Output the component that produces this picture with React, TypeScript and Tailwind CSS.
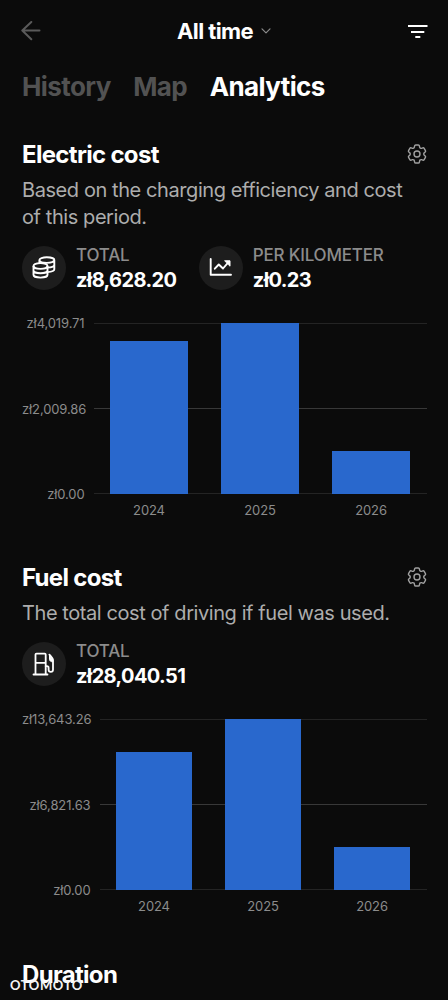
import React from "react";
import { HiOutlineCog6Tooth } from "react-icons/hi2";

type Bar = { year: string; value: number };

function BackIcon() {
  return (
    <svg width="20" height="20" viewBox="0 0 20 20" fill="none" stroke="#5a5a5a" strokeWidth="2" strokeLinecap="round" strokeLinejoin="round">
      <path d="M10.300 1 1.300 9.500l9 8.800M1.600 9.500H18.500" />
    </svg>
  );
}

function FilterIcon() {
  return (
    <svg width="20" height="14" viewBox="0 0 20 14" fill="none" stroke="#fff" strokeWidth="2">
      <path d="M0 2h19.500M3 8h13.300M7.300 13h5" />
    </svg>
  );
}

function CoinsIcon() {
  return (
    <svg width="24" height="24" viewBox="0 0 24 24" fill="none" stroke="#fff" strokeWidth="1.900" strokeLinejoin="round">
      <ellipse cx="8.500" cy="10" rx="7" ry="2.900" />
      <path d="M1.500 10v8.700c0 1.600 3.100 2.900 7 2.900s7-1.300 7-2.900V10M1.500 14.400c0 1.600 3.100 2.900 7 2.900s7-1.300 7-2.900" />
      <path d="M7.400 7.100V4.100c0-1.500 3.200-2.800 7.400-2.800s7.500 1.300 7.500 2.800v9.200c0 1.500-2.800 2.600-6.800 2.800M7.400 4.100c0 1.600 3.200 2.800 7.400 2.800s7.500-1.200 7.500-2.800M22.300 8.700c0 1.500-2.800 2.700-6.800 2.800" />
    </svg>
  );
}

function TrendIcon() {
  return (
    <svg width="24" height="24" viewBox="0 0 24 24" fill="none" stroke="#fff" strokeWidth="1.900" strokeLinecap="round" strokeLinejoin="round">
      <path d="M1.700 3v15.700h20.300M5.800 12.700l4-4.200 4.200 4 5.500-6.300" />
      <path d="M16 4.800h5v5z" fill="#fff" strokeWidth="1" />
    </svg>
  );
}

function FuelIcon() {
  return (
    <svg width="24" height="24" viewBox="0 0 24 24" fill="none" stroke="#fff" strokeWidth="1.800" strokeLinecap="round" strokeLinejoin="round">
      <path d="M1.500 22.500h14M3.500 22.500V2.600c0-.6.4-1 1-1h8.200c.6 0 1 .4 1 1v19.900M3.500 10.800h10.200" />
      <path d="M13.700 14.200h1.200c1.200 0 1.700.7 1.700 1.800v1.800c0 1.300.8 2.100 2.200 2.100s2.200-.8 2.200-2.100V8.300c0-1.500-.6-2.500-1.600-3.500l-2-2.200" />
      <path d="M17.500 3.500v3.800c0 1.500 1.200 2.500 3.300 2.500V7.500z" fill="#fff" strokeWidth="1" />
    </svg>
  );
}

function Heading({ title, gear = false }: { title: string; gear?: boolean }) {
  return (
    <div className="flex h-8 items-center justify-between">
      <h2 className="text-[24px] font-bold tracking-[-0.68px] text-white">{title}</h2>
      {gear && <HiOutlineCog6Tooth className="-mt-[2px] -mr-[3px] size-[24px] stroke-[1.4] text-[#a0a0a0]" />}
    </div>
  );
}

function Stat({ icon, label, value }: { icon: React.ReactNode; label: string; value: string }) {
  return (
    <div className="flex items-center gap-[10px]">
      <div className="flex size-11 items-center justify-center rounded-full bg-[#1d1d1d]">{icon}</div>
      <div className="flex flex-col whitespace-nowrap">
        <span className="text-[17px] leading-[24px] font-medium tracking-[-0.2px] text-[#8c8c8c]">{label}</span>
        <span className="text-[20px] leading-[26px] font-bold tracking-[-0.62px] text-white">{value}</span>
      </div>
    </div>
  );
}

function Chart({ ticks, max, bars, gutter }: { ticks: string[]; max: number; bars: Bar[]; gutter: string }) {
  return (
    <div className={`-mr-[0.5px] grid ${gutter} gap-x-[9px] text-[13px] text-[#8c8c8c]`}>
      <div className="-my-2 flex h-[187px] flex-col justify-between text-right leading-4 tracking-[-0.12px]">
        {ticks.map((t) => (
          <span key={t}>{t}</span>
        ))}
      </div>
      <div className="grid h-[171px]">
        <div className="col-start-1 row-start-1 flex flex-col justify-between">
          <i className="h-px bg-[#242424]" />
          <i className="h-px bg-[#383838]" />
          <i className="h-px bg-[#242424]" />
        </div>
        <div className="col-start-1 row-start-1 flex h-[171px] items-end">
          {bars.map((b) => (
            <div key={b.year} className="flex h-full flex-1 items-end justify-center">
              <div className="w-[70%] bg-[#2968cd]" style={{ height: `${(b.value / max) * 100}%` }} />
            </div>
          ))}
        </div>
      </div>
      <div className="col-start-2 mt-2 flex text-center leading-4 tracking-[-0.1px]">
        {bars.map((b) => (
          <span key={b.year} className="flex-1">
            {b.year}
          </span>
        ))}
      </div>
    </div>
  );
}

export default function App() {
  return (
    <div className="relative h-[1000px] w-[448px] overflow-hidden bg-[#0b0b0b] px-[22px] font-[Inter,'Liberation_Sans',sans-serif]">
      <header className="grid h-[62px] grid-cols-[1fr_auto_1fr] items-center">
        <div className="-ml-px">
          <BackIcon />
        </div>
        <button className="flex items-center gap-[8px]">
          <span className="text-[22px] font-bold tracking-[-0.6px] text-white">All time</span>
          <svg width="10" height="6" viewBox="0 0 10 6" fill="none" stroke="#8a8a8a" strokeWidth="1.200" strokeLinecap="round" strokeLinejoin="round">
            <path d="m1 .8 4 4 4-4" />
          </svg>
        </button>
        <div className="-mr-[2px] justify-self-end">
          <FilterIcon />
        </div>
      </header>
      <nav className="flex h-[49px] items-center gap-[22.5px] text-[26px] font-bold tracking-[-0.6px] text-[#525252]">
        <span>History</span>
        <span>Map</span>
        <span className="text-white">Analytics</span>
      </nav>
      <section className="mt-[28px]">
        <Heading title="Electric cost" gear />
        <p className="mt-[6px] text-[20px] leading-[27px] tracking-[-0.42px] text-[#adadad]">
          Based on the charging efficiency and cost
          <br />
          of this period.
        </p>
        <div className="mt-[12px] flex h-[50px] gap-[22.500px]">
          <Stat icon={<CoinsIcon />} label="TOTAL" value="zł8,628.20" />
          <Stat icon={<TrendIcon />} label="PER KILOMETER" value="zł0.23" />
        </div>
        <div className="mt-[30px]">
          <Chart
            gutter="grid-cols-[62.5px_1fr]"
            ticks={["zł4,019.71", "zł2,009.86", "zł0.00"]}
            max={4019.71}
            bars={[
              { year: "2024", value: 3603 },
              { year: "2025", value: 4019.71 },
              { year: "2026", value: 1005 },
            ]}
          />
        </div>
      </section>
      <section className="mt-[44px]">
        <Heading title="Fuel cost" gear />
        <p className="mt-[6px] text-[20px] leading-[27px] tracking-[-0.42px] text-[#adadad]">The total cost of driving if fuel was used.</p>
        <div className="mt-[12px] flex h-[50px]">
          <Stat icon={<FuelIcon />} label="TOTAL" value="zł28,040.51" />
        </div>
        <div className="mt-[30px]">
          <Chart
            gutter="grid-cols-[68.5px_1fr]"
            ticks={["zł13,643.26", "zł6,821.63", "zł0.00"]}
            max={13643.26}
            bars={[
              { year: "2024", value: 11010 },
              { year: "2025", value: 13643.26 },
              { year: "2026", value: 3430 },
            ]}
          />
        </div>
      </section>
      <section className="mt-[45px]">
        <Heading title="Duration" />
      </section>
      <div className="absolute top-[977px] left-[10px] font-[Lato,sans-serif] text-[13px] leading-4 font-bold tracking-[0.6px] text-[#f4f4f4]">OTOMOTO</div>
    </div>
  );
}
